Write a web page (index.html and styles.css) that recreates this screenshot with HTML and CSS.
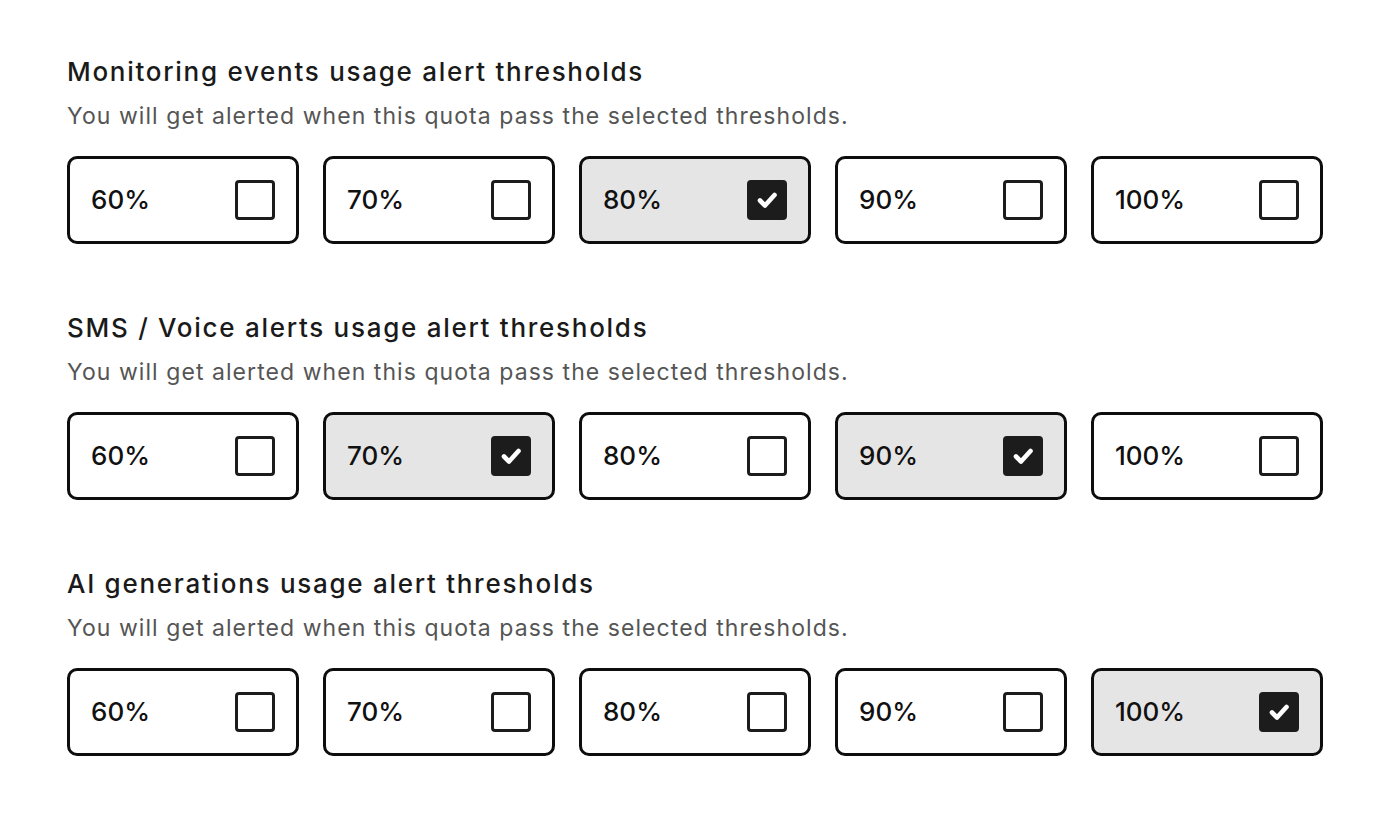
FILE: index.html
```html
<!DOCTYPE html>
<html lang="en">
<head>
<meta charset="utf-8">
<title>Usage alert thresholds</title>
<link rel="stylesheet" href="styles.css">
</head>
<body>
<main class="page">
  <section class="section">
    <h2 class="title">Monitoring events usage alert thresholds</h2>
    <p class="subtitle">You will get alerted when this quota pass the selected thresholds.</p>
    <div class="options">
      <label class="option"><span class="pct">60%</span><span class="box"></span></label>
      <label class="option"><span class="pct">70%</span><span class="box"></span></label>
      <label class="option checked"><span class="pct">80%</span><span class="box"><svg viewBox="0 0 40 40"><path d="M13 20.5 L18 25.5 L27.5 15"/></svg></span></label>
      <label class="option"><span class="pct">90%</span><span class="box"></span></label>
      <label class="option"><span class="pct">100%</span><span class="box"></span></label>
    </div>
  </section>
  <section class="section">
    <h2 class="title">SMS / Voice alerts usage alert thresholds</h2>
    <p class="subtitle">You will get alerted when this quota pass the selected thresholds.</p>
    <div class="options">
      <label class="option"><span class="pct">60%</span><span class="box"></span></label>
      <label class="option checked"><span class="pct">70%</span><span class="box"><svg viewBox="0 0 40 40"><path d="M13 20.5 L18 25.5 L27.5 15"/></svg></span></label>
      <label class="option"><span class="pct">80%</span><span class="box"></span></label>
      <label class="option checked"><span class="pct">90%</span><span class="box"><svg viewBox="0 0 40 40"><path d="M13 20.5 L18 25.5 L27.5 15"/></svg></span></label>
      <label class="option"><span class="pct">100%</span><span class="box"></span></label>
    </div>
  </section>
  <section class="section">
    <h2 class="title">AI generations usage alert thresholds</h2>
    <p class="subtitle">You will get alerted when this quota pass the selected thresholds.</p>
    <div class="options">
      <label class="option"><span class="pct">60%</span><span class="box"></span></label>
      <label class="option"><span class="pct">70%</span><span class="box"></span></label>
      <label class="option"><span class="pct">80%</span><span class="box"></span></label>
      <label class="option"><span class="pct">90%</span><span class="box"></span></label>
      <label class="option checked"><span class="pct">100%</span><span class="box"><svg viewBox="0 0 40 40"><path d="M13 20.5 L18 25.5 L27.5 15"/></svg></span></label>
    </div>
  </section>
</main>
</body>
</html>
```

FILE: styles.css
```css
html, body {
  margin: 0;
  padding: 0;
  background: #ffffff;
}
body {
  font-family: "Inter", "Noto Sans", sans-serif;
  color: #151515;
}
.page {
  padding: 56px 64px 0 67px;
  display: flex;
  flex-direction: column;
  gap: 68px;
}
.section {
  display: flex;
  flex-direction: column;
}
.title {
  margin: 0;
  font-size: 26px;
  line-height: 32px;
  font-weight: 500;
  letter-spacing: 1.72px;
  color: #1a1a1a;
}
.subtitle {
  margin: 12px 0 0;
  font-size: 23px;
  line-height: 32px;
  font-weight: 400;
  letter-spacing: 1.06px;
  color: #555555;
}
.options {
  margin-top: 24px;
  display: grid;
  grid-template-columns: repeat(5, 232px);
  gap: 24px;
}
.option {
  box-sizing: border-box;
  height: 88px;
  border: 3px solid #0d0d0d;
  border-radius: 10px;
  background: #ffffff;
  display: flex;
  align-items: center;
  justify-content: space-between;
  padding: 0 21px 0 21px;
}
.option.checked {
  background: #e5e5e5;
}
.pct {
  font-size: 26px;
  font-weight: 500;
  line-height: 32px;
  color: #111111;
}
.box {
  box-sizing: border-box;
  width: 40px;
  height: 40px;
  border: 3px solid #1c1c1c;
  border-radius: 4px;
  background: #ffffff;
  display: flex;
}
.option.checked .box {
  background: #1c1c1c;
  border-color: #1c1c1c;
}
.box svg {
  width: 40px;
  height: 40px;
  margin: -3px;
}
.box path {
  fill: none;
  stroke: #ffffff;
  stroke-width: 4.6;
  stroke-linecap: round;
  stroke-linejoin: round;
}
```
